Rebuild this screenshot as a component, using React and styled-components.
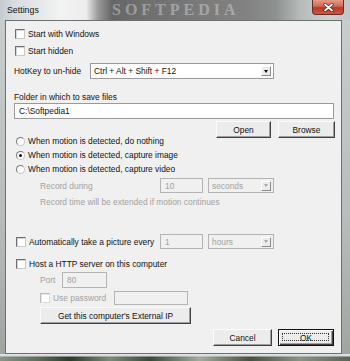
import React from 'react';
import styled, { createGlobalStyle } from 'styled-components';

const GlobalStyle = createGlobalStyle`
  html, body {
    margin: 0;
    padding: 0;
    background: #ffffff;
  }
  body {
    font-family: "Liberation Sans", Arial, sans-serif;
  }
`;

const Window = styled.div`
    width: 350px;
    height: 361px;
    display: flex;
    flex-direction: column;
    overflow: hidden;
    background: linear-gradient(180deg, #c9cecf 0%, #b7bdbc 60%, #9ea59f 100%);
`;

const TitleBar = styled.div`
    position: relative;
    height: 20px;
    display: flex;
    align-items: flex-start;
    background: linear-gradient(90deg, #c4cacd 0px, #d9dde0 14px, #e6e8ea 40px, #f2f2f2 60px, #ededed 86px, #9a9a9a 98px, #666666 112px, #6e6e6e 140px, #7a7a7a 200px, #838383 250px, #8d9190 276px, #b6bbba 300px, #cbcfcf 330px, #c0c5c5 350px);
`;

const Title = styled.span`
    margin: 5px 0 0 7px;
    font-size: 8.8px;
    color: #111;
`;

const Watermark = styled.span`
    position: absolute;
    left: 112px;
    top: 1px;
    line-height: 17px;
    font-family: "Liberation Serif", serif;
    font-weight: bold;
    font-size: 16px;
    letter-spacing: 4px;
    color: rgba(235, 235, 235, 0.4);
`;

const CloseButton = styled.div`
    margin-left: auto;
    margin-right: 6px;
    width: 30px;
    height: 14px;
    display: flex;
    align-items: center;
    justify-content: center;
    border: 1px solid #6b2a22;
    border-top: none;
    border-radius: 0 0 4px 4px;
    background: linear-gradient(180deg, #e49a88 0%, #d0695a 45%, #b7372a 55%, #c65a3f 100%);
`;

const Middle = styled.div`
    flex: 1;
    display: flex;
`;

const Client = styled.div`
    flex: 1;
    margin: 0 8px 0 5px;
    border: 1px solid #6d7070;
    background: #f0f0f0;
    padding: 6px 0 0 8px;
    font-size: 8.4px;
    color: #111;
    display: flex;
    flex-direction: column;
`;

const BottomFrame = styled.div`
    height: 7px;
    background:
      linear-gradient(180deg, #e4e6e6 0px, #d6d9d8 2px, rgba(0,0,0,0) 3px),
      linear-gradient(90deg, #8c9488 0px, #5d6a56 40px, #2f382c 70px, #7e8a76 110px, #3c4738 150px, #a4ad9d 200px, #48513f 250px, #8b9386 300px, #5a6353 350px);
`;

const Row = styled.div`
    display: flex;
    align-items: center;
    height: ${p => p.$h || 14}px;
    margin-top: ${p => p.$mt || 0}px;
    padding-left: ${p => p.$indent || 0}px;
    padding-right: ${p => p.$pr || 0}px;
    justify-content: ${p => (p.$end ? 'flex-end' : 'flex-start')};
    gap: ${p => p.$gap || 0}px;
    white-space: nowrap;
`;

const CheckBox = styled.span`
    width: 8px;
    height: 8px;
    flex: none;
    margin-right: 3px;
    background: #fff;
    border: 1px solid;
    border-color: ${p => (p.$disabled ? '#b9b9b9 #dcdcdc #dcdcdc #b9b9b9' : '#6f6f6f #c9c9c9 #c9c9c9 #6f6f6f')};
    box-shadow: inset 1px 1px ${p => (p.$disabled ? '#e8e8e8' : '#d5d5d5')};
`;

const Radio = styled.span`
    position: relative;
    width: 7px;
    height: 7px;
    flex: none;
    margin: 0 3px 0 2px;
    border-radius: 50%;
    background: #fff;
    border: 1px solid;
    border-color: #7a7a7a #c8c8c8 #c8c8c8 #7a7a7a;

    &::after {
        content: '';
        display: ${p => (p.$checked ? 'block' : 'none')};
        position: absolute;
        left: 2px;
        top: 2px;
        width: 3px;
        height: 3px;
        border-radius: 50%;
        background: #111;
    }
`;

const Label = styled.span`
    display: inline-block;
    width: ${p => (p.$w ? `${p.$w}px` : 'auto')};
    flex: none;
    color: ${p => (p.$disabled ? '#a2a2a2' : '#111')};
`;

const TextBox = styled.div`
    width: ${p => p.$w}px;
    height: ${p => p.$h || 15}px;
    box-sizing: border-box;
    flex: none;
    display: flex;
    align-items: center;
    padding-left: 4px;
    border: 1px solid ${p => (p.$disabled ? '#b4b4b4' : '#9a9a9a')};
    background: ${p => (p.$disabled ? '#f0f0f0' : '#fff')};
    color: ${p => (p.$disabled ? '#a2a2a2' : '#111')};
`;

const Combo = styled(TextBox)`
    padding-left: 3px;
    justify-content: space-between;
    padding-right: 2px;
    margin-left: ${p => p.$ml || 0}px;
`;

const DropArrow = styled.span`
    width: 10px;
    height: 10px;
    box-sizing: border-box;
    display: flex;
    align-items: center;
    justify-content: center;
    background: #ececec;
    border: 1px solid;
    border-color: #fff #8a8a8a #8a8a8a #fff;

    &::after {
        content: '';
        border-left: 2.5px solid transparent;
        border-right: 2.5px solid transparent;
        border-top: 3px solid ${p => (p.$disabled ? '#a8a8a8' : '#111')};
    }
`;

const Button = styled.div`
    position: relative;
    width: ${p => p.$w}px;
    height: ${p => p.$h || 17}px;
    box-sizing: border-box;
    flex: none;
    display: flex;
    align-items: center;
    justify-content: center;
    background: #ececec;
    border: 1px solid;
    border-color: ${p => (p.$default ? '#111' : '#fbfbfb #404040 #404040 #fbfbfb')};
    box-shadow: ${p => (p.$default
        ? 'inset 1px 1px #fbfbfb, inset -1px -1px #404040, inset -2px -2px #a0a0a0'
        : 'inset -1px -1px #a0a0a0')};
    color: #111;

    &::after {
        content: '';
        display: ${p => (p.$default ? 'block' : 'none')};
        position: absolute;
        left: 3px;
        top: 3px;
        right: 4px;
        bottom: 4px;
        border: 1px dotted #333;
    }
`;

const CloseGlyph = () => (
    <svg width="11" height="9" viewBox="0 0 11 9">
        <path d="M2 1.5 L9 7.5 M9 1.5 L2 7.5" stroke="#5a1c14" strokeWidth="3.2" strokeLinecap="round" />
        <path d="M2 1.5 L9 7.5 M9 1.5 L2 7.5" stroke="#fff" strokeWidth="1.8" strokeLinecap="round" />
    </svg>
);

const App = () => {
    return (
        <>
            <GlobalStyle />
            <Window>
                <TitleBar>
                    <Title>Settings</Title>
                    <Watermark>SOFTPEDIA</Watermark>
                    <CloseButton><CloseGlyph /></CloseButton>
                </TitleBar>
                <Middle>
                    <Client>
                        <Row $indent={1}>
                            <CheckBox /><Label>Start with Windows</Label>
                        </Row>
                        <Row $mt={3} $indent={1}>
                            <CheckBox /><Label>Start hidden</Label>
                        </Row>
                        <Row $mt={5} $h={16}>
                            <Label $w={76}>HotKey to un-hide</Label>
                            <Combo $w={184} $h={16}>
                                <span>Ctrl + Alt + Shift + F12</span>
                                <DropArrow />
                            </Combo>
                        </Row>
                        <Row $mt={12} $h={12}>
                            <Label>Folder in which to save files</Label>
                        </Row>
                        <Row $h={16}>
                            <TextBox $w={320} $h={16}>C:\Softpedia1</TextBox>
                        </Row>
                        <Row $mt={2} $h={17} $end $pr={6} $gap={7}>
                            <Button $w={55}>Open</Button>
                            <Button $w={57}>Browse</Button>
                        </Row>
                        <Row $mt={-4}>
                            <Radio /><Label>When motion is detected, do nothing</Label>
                        </Row>
                        <Row>
                            <Radio $checked /><Label>When motion is detected, capture image</Label>
                        </Row>
                        <Row>
                            <Radio /><Label>When motion is detected, capture video</Label>
                        </Row>
                        <Row $mt={2} $h={15} $indent={26}>
                            <Label $w={120} $disabled>Record during</Label>
                            <TextBox $w={43} $disabled>10</TextBox>
                            <Combo $w={66} $disabled $ml={5}>
                                <span>seconds</span>
                                <DropArrow $disabled />
                            </Combo>
                        </Row>
                        <Row $mt={3} $h={12} $indent={26}>
                            <Label $disabled>Record time will be extended if motion continues</Label>
                        </Row>
                        <Row $mt={26} $h={15} $indent={2}>
                            <CheckBox /><Label $w={131}>Automatically take a picture every</Label>
                            <TextBox $w={43} $disabled>1</TextBox>
                            <Combo $w={66} $disabled $ml={5}>
                                <span>hours</span>
                                <DropArrow $disabled />
                            </Combo>
                        </Row>
                        <Row $mt={8} $indent={2}>
                            <CheckBox /><Label>Host a HTTP server on this computer</Label>
                        </Row>
                        <Row $mt={1} $h={16} $indent={26}>
                            <Label $w={22} $disabled>Port</Label>
                            <TextBox $w={45} $h={16} $disabled>80</TextBox>
                        </Row>
                        <Row $mt={2} $h={15} $indent={26}>
                            <CheckBox $disabled /><Label $w={61} $disabled>Use password</Label>
                            <TextBox $w={74} $h={14} $disabled />
                        </Row>
                        <Row $mt={2} $h={17} $indent={26}>
                            <Button $w={151}>Get this computer's External IP</Button>
                        </Row>
                        <Row $mt={5} $h={17} $end $pr={7} $gap={6}>
                            <Button $w={59}>Cancel</Button>
                            <Button $w={56} $default>OK</Button>
                        </Row>
                    </Client>
                </Middle>
                <BottomFrame />
            </Window>
        </>
    );
};

export default App;
